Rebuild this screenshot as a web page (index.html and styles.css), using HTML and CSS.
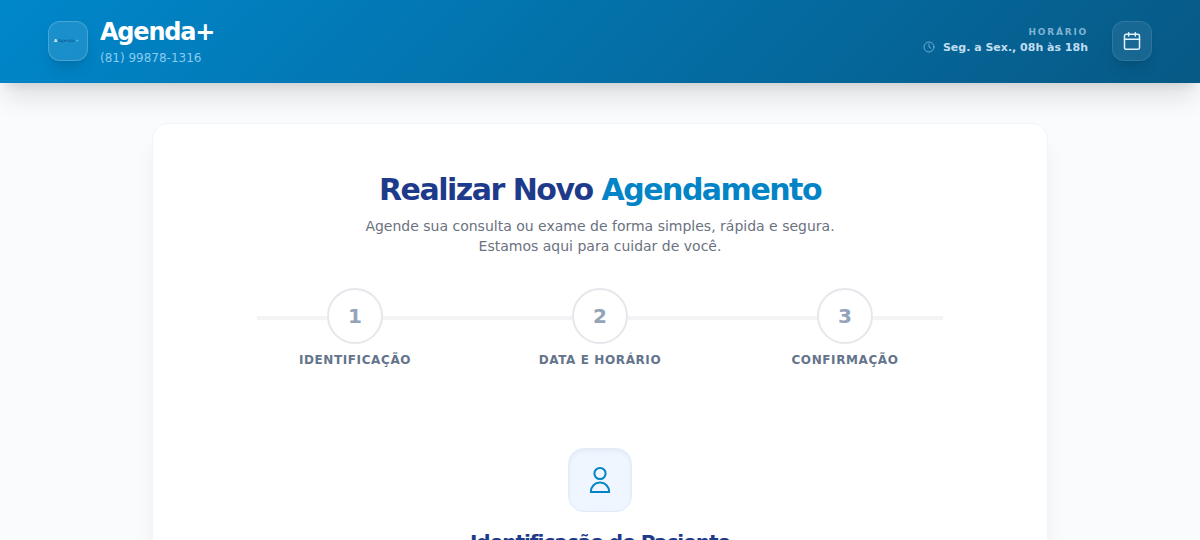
FILE: index.html
```html
<!DOCTYPE html>
<html lang="pt-BR">
<head>
<meta charset="utf-8">
<title>Agenda+</title>
<link rel="stylesheet" href="styles.css">
</head>
<body>
<header class="header">
  <div class="brand">
    <div class="tile logo"><span class="logo-mark">A</span><span class="logo-word">Agenda</span><span class="logo-plus">+</span></div>
    <div>
      <h1 class="brand-name">Agenda+</h1>
      <p class="brand-phone">(81) 99878-1316</p>
    </div>
  </div>
  <div class="info">
    <div class="hours">
      <div class="hours-label">Horário</div>
      <div class="hours-value">
        <svg class="clock" viewBox="0 0 24 24"><circle cx="12" cy="12" r="10"/><path d="M12 6v6l4 2.5"/></svg>
        <span>Seg. a Sex., 08h às 18h</span>
      </div>
    </div>
    <div class="tile">
      <svg class="calendar" viewBox="0 0 24 24"><rect x="3" y="4" width="18" height="18" rx="2"/><path d="M16 2v4M8 2v4M3 10h18"/></svg>
    </div>
  </div>
</header>
<main class="main">
  <section class="card">
    <h2 class="title">Realizar Novo <span class="accent">Agendamento</span></h2>
    <p class="subtitle">Agende sua consulta ou exame de forma simples, rápida e segura.<br>Estamos aqui para cuidar de você.</p>
    <ol class="steps">
      <li class="step"><span class="step-number">1</span><span class="step-label">Identificação</span></li>
      <li class="step"><span class="step-number">2</span><span class="step-label">Data e Horário</span></li>
      <li class="step"><span class="step-number">3</span><span class="step-label">Confirmação</span></li>
    </ol>
    <div class="patient">
      <div class="patient-icon">
        <svg class="user" viewBox="0 0 32 32"><circle cx="16" cy="9.5" r="5.6"/><path d="M6.8 28.1c0-5.6 4-9.5 9.2-9.5s9.2 3.9 9.2 9.5z"/></svg>
      </div>
      <h3 class="patient-title">Identificação do Paciente</h3>
    </div>
  </section>
</main>
</body>
</html>
```

FILE: styles.css
```css
* { box-sizing: border-box; margin: 0; padding: 0; }
html { height: 100%; overflow: hidden; }
body {
  height: 540px;
  overflow: hidden;
  background: #fafbfd;
  font-family: "DejaVu Sans", sans-serif;
}
svg { display: block; fill: none; stroke: currentColor; stroke-linecap: round; stroke-linejoin: round; }

.header {
  position: relative;
  z-index: 1;
  display: flex;
  align-items: center;
  justify-content: space-between;
  height: 83px;
  padding: 0 48px 1px;
  background: linear-gradient(135deg, #0087cb, #075985);
  box-shadow: 0 20px 25px -5px rgba(0,0,0,.1), 0 8px 10px -6px rgba(0,0,0,.1);
}
.brand, .info { display: flex; align-items: center; }
.brand { gap: 12px; }
.info { gap: 24px; }
.tile {
  display: flex;
  align-items: center;
  justify-content: center;
  width: 40px;
  height: 40px;
  border: 1px solid rgba(255,255,255,.2);
  border-radius: 12px;
  background: rgba(255,255,255,.1);
  box-shadow: 0 10px 15px -3px rgba(0,0,0,.1), 0 4px 6px -4px rgba(0,0,0,.1);
}
.info .tile { border-color: rgba(255,255,255,.1); background: rgba(255,255,255,.07); }
.logo { gap: 1px; padding-right: 3px; font-size: 4px; line-height: 1; }
.logo-mark { color: #fff; font-weight: 700; }
.logo-word { letter-spacing: .2px; color: #084e86; }
.logo-plus { color: #5fd0ff; font-weight: 700; }
.brand-name { font-size: 24px; line-height: 32px; letter-spacing: -1.2px; color: #fff; }
.brand-phone { margin-top: 2px; font-size: 12px; line-height: 16px; color: #8acbf0; }

.hours { padding-bottom: 2px; }
.hours-label {
  font-size: 9px;
  font-weight: 700;
  line-height: 14px;
  letter-spacing: 1.8px;
  text-align: right;
  text-transform: uppercase;
  color: #7eb4d4;
}
.hours-value { display: flex; align-items: center; gap: 8px; font-size: 11px; font-weight: 700; line-height: 17px; color: #c0def1; }
.clock { width: 12px; height: 12px; stroke-width: 1.7; color: #79b7df; }
.calendar { width: 20px; height: 20px; stroke-width: 1.8; color: #e0f2fe; }

.main { display: flex; justify-content: center; padding-top: 40px; }
.card {
  width: 896px;
  height: 417px;
  padding: 48px 48px 0;
  border: 1px solid #f1f4f8;
  border-bottom: 0;
  border-radius: 16px 16px 0 0;
  background: #fff;
  box-shadow: 0 20px 25px -5px rgba(15,23,42,.08), 0 8px 10px -6px rgba(15,23,42,.06);
  text-align: center;
}
.title { font-size: 30px; line-height: 36px; letter-spacing: -1.5px; color: #1e3a8a; }
.accent { color: #0284c7; }
.subtitle { margin-top: 8px; font-size: 14px; line-height: 20px; color: #6b7280; }
.steps {
  display: grid;
  grid-template-columns: repeat(3, 245px);
  justify-content: center;
  margin-top: 32px;
  list-style: none;
  background: linear-gradient(#f3f4f6, #f3f4f6) center 28px / 686px 4px no-repeat;
}
.step { display: flex; flex-direction: column; align-items: center; gap: 8px; }
.step-number {
  display: flex;
  align-items: center;
  justify-content: center;
  width: 56px;
  height: 56px;
  border: 2px solid #e5e7eb;
  border-radius: 50%;
  background: #fff;
  font-size: 20px;
  font-weight: 700;
  color: #94a3b8;
}
.step-label { font-size: 12px; font-weight: 700; line-height: 16px; letter-spacing: .6px; text-transform: uppercase; color: #64748b; }

.patient { display: flex; flex-direction: column; align-items: center; gap: 16px; margin-top: 80px; }
.patient-icon {
  display: flex;
  align-items: center;
  justify-content: center;
  width: 64px;
  height: 64px;
  border: 1px solid #e0ebf8;
  border-radius: 16px;
  background: #eff6ff;
  box-shadow: inset 0 2px 4px rgba(0,0,0,.05);
}
.user { width: 32px; height: 32px; stroke-width: 2; color: #0284c7; }
.patient-title { font-size: 20px; line-height: 28px; letter-spacing: -1px; color: #1e3a8a; }
```
